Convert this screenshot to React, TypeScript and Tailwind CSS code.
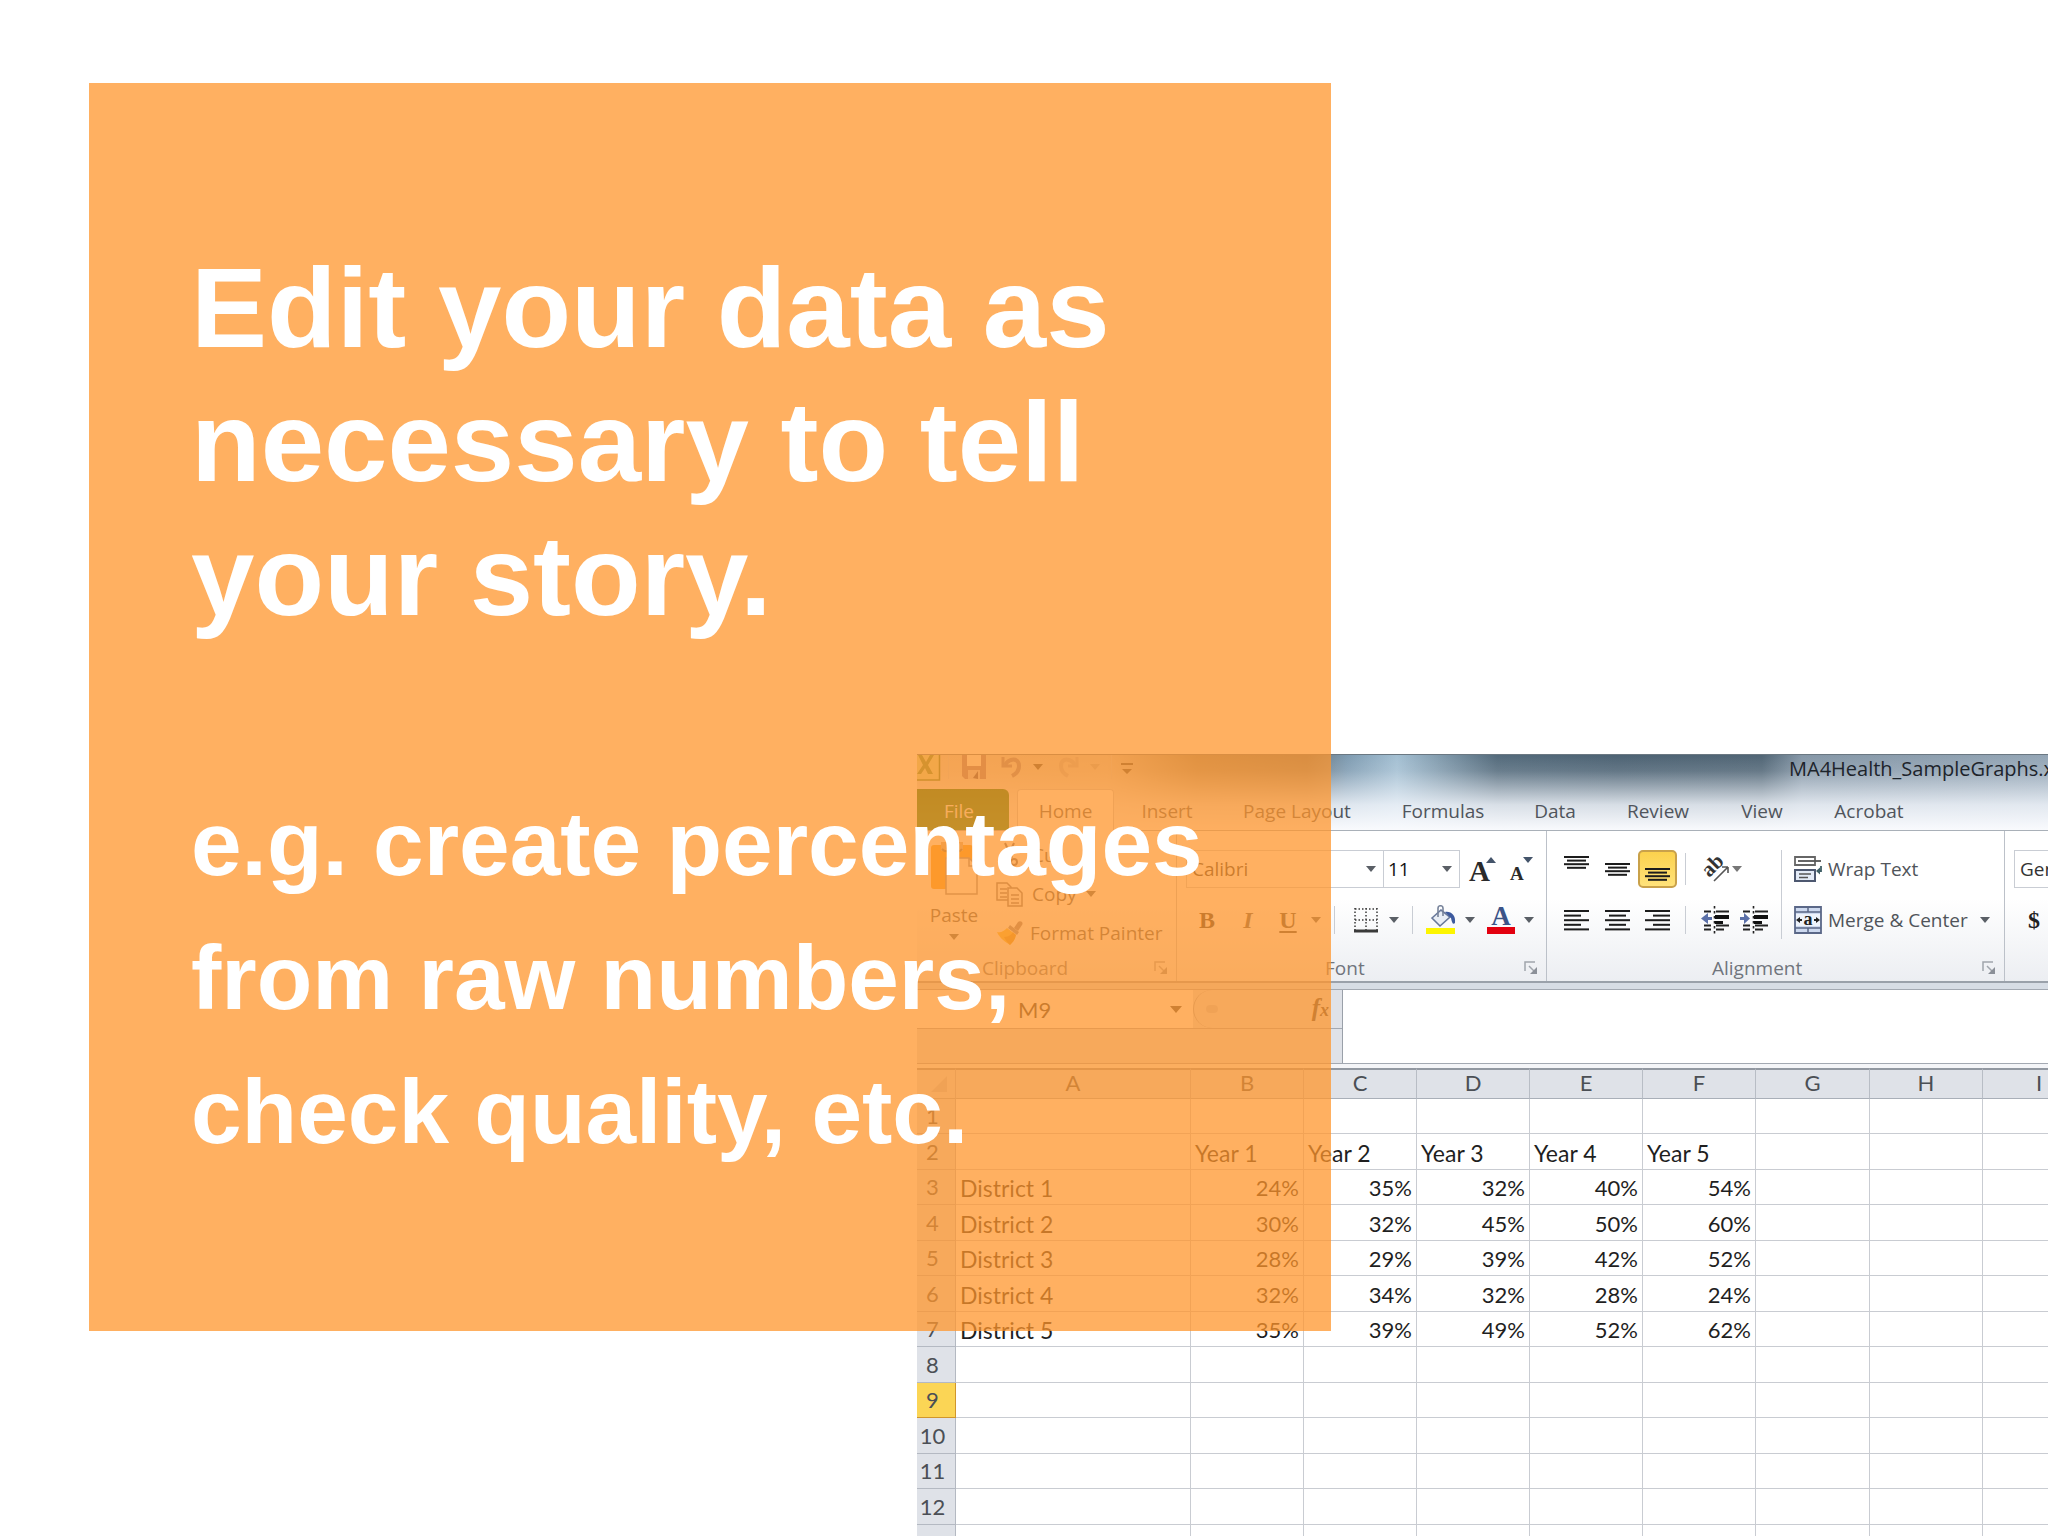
import type { ReactNode } from "react";

const UI = "font-['Open_Sans','Noto_Sans',sans-serif]";
const CELL = "font-['Lato','Noto_Sans',sans-serif]";

const tabs = [
  { name: "Insert", width: "w-[106px]" },
  { name: "Page Layout", width: "w-[154px]" },
  { name: "Formulas", width: "w-[138px]" },
  { name: "Data", width: "w-[86px]" },
  { name: "Review", width: "w-[120px]" },
  { name: "View", width: "w-[88px]" },
  { name: "Acrobat", width: "w-[126px]" },
];

const columns = [
  { name: "A", width: "w-[235px]" },
  { name: "B", width: "w-[113px]" },
  { name: "C", width: "w-[113px]" },
  { name: "D", width: "w-[113px]" },
  { name: "E", width: "w-[113px]" },
  { name: "F", width: "w-[113px]" },
  { name: "G", width: "w-[114px]" },
  { name: "H", width: "w-[113px]" },
  { name: "I", width: "w-[113px]" },
];

const rows: string[][] = [
  [],
  ["", "Year 1", "Year 2", "Year 3", "Year 4", "Year 5"],
  ["District 1", "24%", "35%", "32%", "40%", "54%"],
  ["District 2", "30%", "32%", "45%", "50%", "60%"],
  ["District 3", "28%", "29%", "39%", "42%", "52%"],
  ["District 4", "32%", "34%", "32%", "28%", "24%"],
  ["District 5", "35%", "39%", "49%", "52%", "62%"],
  [],
  [],
  [],
  [],
  [],
];

function Caret({ className = "text-[#5a5f66]" }: { className?: string }) {
  return (
    <svg viewBox="0 0 10 6" className={`h-[6px] w-[10px] shrink-0 ${className}`} aria-hidden="true">
      <path d="M0 0h10L5 6z" fill="currentColor" />
    </svg>
  );
}

function Rule({ className = "" }: { className?: string }) {
  return <span className={`w-px shrink-0 bg-[#c9cdd4] ${className}`} />;
}

function IconButton({ label, className = "w-10", children }: { label: string; className?: string; children: ReactNode }) {
  return (
    <button type="button" aria-label={label} className={`flex h-[38px] shrink-0 items-center justify-center ${className}`}>
      {children}
    </button>
  );
}

function Bars({ lines, y = 0 }: { lines: [number, number][]; y?: number }) {
  return (
    <svg viewBox="0 0 26 26" className="h-[26px] w-[26px]" aria-hidden="true">
      {lines.map(([x, w], i) => (
        <rect key={i} x={x} y={y + i * 4.6} width={w} height={2} fill="#1c1c1c" />
      ))}
    </svg>
  );
}

function TightBars({ y }: { y: number }) {
  return (
    <svg viewBox="0 0 26 34" className="h-[34px] w-[26px] shrink-0" aria-hidden="true">
      {[
        [0, 25],
        [3, 19],
        [0, 25],
        [3, 19],
      ].map(([x, w], i) => (
        <rect key={i} x={x} y={y + i * 3.6} width={w} height={2} fill="#1c1c1c" />
      ))}
    </svg>
  );
}

function Launcher() {
  return (
    <button type="button" aria-label="More options" className="ml-auto shrink-0">
      <svg viewBox="0 0 14 14" className="h-[14px] w-[14px]" fill="none" stroke="#a0a5ac" strokeWidth="1.5" aria-hidden="true">
        <path d="M1 10V1h10" />
        <path d="M5 5l6 6" />
        <path d="M13 6v7H6z" fill="#8b9098" stroke="none" />
      </svg>
    </button>
  );
}

function Group({ name, className, labelPad, children }: { name: string; className: string; labelPad: string; children: ReactNode }) {
  return (
    <section aria-label={name} className={`flex shrink-0 flex-col border-r border-[#bcc1c9] ${className}`}>
      <div className="h-[124px]">{children}</div>
      <div className={`flex h-[26px] items-center pr-2 ${labelPad}`}>
        <span className="leading-[26px] text-[#70757d]">{name}</span>
        <Launcher />
      </div>
    </section>
  );
}

function Indent({ right = false }: { right?: boolean }) {
  return (
    <svg viewBox="0 0 28 28" className="h-[28px] w-[28px]" aria-hidden="true">
      <path d="M13.5 0v28" stroke="#222" strokeWidth="1.6" strokeDasharray="2.5 2.5" />
      <path d="M3 5.500h7M3 19.500h7M3 23.500h7" stroke="#222" strokeWidth="2" />
      <path d="M15 5.500h13M15 19.500h13M15 23.500h8" stroke="#222" strokeWidth="2" />
      <path d="M14 9h14v4H14zM14 15h8v3h-8z" fill="#111" />
      {right ? (
        <path d="M0 11h4V7l6 5.500-6 5.500v-4H0z" fill="#5b70a8" />
      ) : (
        <path d="M11 11H7V7l-7 5.500 7 5.500v-4h4z" fill="#5b70a8" />
      )}
    </svg>
  );
}

function TitleBar() {
  return (
    <header className="bg-[linear-gradient(to_bottom,rgba(240,244,250,0)_0%,rgba(240,244,250,0.15)_22%,rgba(240,244,250,0.85)_66%,rgba(250,251,254,1)_100%),linear-gradient(to_right,#d5d0c8_0px,#cdc8c0_190px,#85867f_280px,#66757f_390px,#7d9ab0_430px,#a3bfd2_480px,#52697a_580px,#4b6172_700px,#4f6474_845px,#8496a6_885px,#93a5b5_1131px)]">
      <div className="flex h-[35px] items-start border-t border-[#6b7882]">
        <svg viewBox="0 0 24 26" className="h-[26px] w-[24px] shrink-0" aria-hidden="true">
          <path d="M0 0h22v25H0z" fill="#cfdc9a" />
          <path d="M22.500 0v25H0" fill="none" stroke="#4a7a2a" strokeWidth="1.5" />
          <path d="M1 0h4l4 7 4-7h4l-6 10 5 9h-5l-3-6-4 6H0l6-9z" fill="#5d8a3a" />
        </svg>
        <Rule className="ml-[7px] h-[24px] bg-[#9a9a9a]" />
        <button type="button" aria-label="Save" className="ml-[13px]">
          <svg viewBox="0 0 24 25" className="h-[25px] w-[24px]" aria-hidden="true">
            <path d="M0 0h24v24H3l-3-3z" fill="#8f7a90" />
            <path d="M5 0h14v11H5z" fill="#f4f1ee" />
            <path d="M6 15h12v9H6z" fill="#c9c4cc" />
            <path d="M11 23l5-7v8z" fill="#4d4160" />
          </svg>
        </button>
        <button type="button" aria-label="Undo" className="ml-[15px] flex items-center gap-[10px]">
          <svg viewBox="0 0 22 24" className="h-[24px] w-[22px]" fill="none" stroke="#8a7f94" strokeWidth="4" aria-hidden="true">
            <path d="M2 2v9h9" strokeWidth="3" />
            <path d="M4 10C8 3 18 2 18 11c0 5-3 8-7 10" />
          </svg>
          <Caret className="text-[#444]" />
        </button>
        <button type="button" aria-label="Redo" className="ml-[14px] flex items-center gap-[11px] opacity-35">
          <svg viewBox="0 0 22 24" className="h-[24px] w-[22px]" fill="none" stroke="#8a8494" strokeWidth="4" aria-hidden="true">
            <path d="M20 2v9h-9" strokeWidth="3" />
            <path d="M18 10C14 3 4 2 4 11c0 5 3 8 7 10" />
          </svg>
          <Caret className="text-[#777]" />
        </button>
        <Rule className="ml-[11px] h-[24px] bg-[#9a9a9a]" />
        <button type="button" aria-label="Customize Quick Access Toolbar" className="mt-[8px] ml-[9px]">
          <svg viewBox="0 0 12 12" className="h-[12px] w-[12px]" fill="#444" aria-hidden="true">
            <path d="M0 0h12v2H0zM1 6h10l-5 5z" />
          </svg>
        </button>
        <h2 className="ml-[656px] text-[20px] leading-[28px] whitespace-nowrap text-[#1d242b]">MA4Health_SampleGraphs.x</h2>
      </div>
      <nav aria-label="Ribbon tabs" className="flex h-[42px] border-b border-[#a9b0b8] leading-[44px] text-[#50555c]">
        <button type="button" className="w-[92px] shrink-0 rounded-tr-md bg-[linear-gradient(to_bottom,#0b6a0b,#1b8020)] pr-2 text-[#e6f0e6]">File</button>
        <button type="button" className="-mb-px ml-2 w-[97px] shrink-0 rounded-t-sm border border-b-0 border-[#c3c8cf] bg-white leading-[42px]">Home</button>
        {tabs.map((t) => (
          <button key={t.name} type="button" className={`shrink-0 whitespace-nowrap ${t.width}`}>
            {t.name}
          </button>
        ))}
      </nav>
    </header>
  );
}

function Clipboard() {
  return (
    <Group name="Clipboard" className="w-[260px]" labelPad="pl-[65px]">
      <div className="flex pl-[13px]">
        <button type="button" className="flex w-[48px] flex-col items-center pt-[10px]">
          <svg viewBox="0 0 48 54" className="h-[54px] w-[48px]" aria-hidden="true">
            <rect x="1" y="4" width="42" height="44" rx="3" fill="#f5a52b" />
            <path d="M11 1h22v9H11z" fill="#d8b58a" />
            <path d="M12 8c3 3 6 3 8 0M24 8c3 3 6 3 8 0" fill="none" stroke="#8a7048" strokeWidth="2" />
            <path d="M16 17h23l8 8v28H16z" fill="#fff" stroke="#8c8a94" strokeWidth="1.5" />
            <path d="M39 17v8h8" fill="none" stroke="#8c8a94" strokeWidth="1.5" />
          </svg>
          <span className="mt-[6px] leading-7">Paste</span>
          <span className="flex h-[16px] items-center">
            <Caret />
          </span>
        </button>
        <div className="flex flex-col pt-[4px] pl-[18px]">
          <button type="button" className="flex h-[39px] items-center gap-2">
            <svg viewBox="0 0 28 26" className="h-[26px] w-[28px]" fill="none" stroke="#6b6470" strokeWidth="2" aria-hidden="true">
              <path d="M9 1l7 15M18 1l-7 15" />
              <circle cx="9" cy="19" r="3" />
              <circle cx="18" cy="20" r="3" />
            </svg>
            Cut
          </button>
          <button type="button" className="flex h-[39px] items-center gap-2">
            <svg viewBox="0 0 28 26" className="h-[26px] w-[28px]" fill="#f7f7f7" stroke="#77747e" strokeWidth="1.5" aria-hidden="true">
              <path d="M1 2h10l4 4v13H1z" />
              <path d="M4 8h7M4 12h7M4 16h7" />
              <path d="M12 7h9l5 5v13H12z" />
              <path d="M15 14h8M15 18h8M15 22h8" />
            </svg>
            Copy
            <span className="pl-px">
              <Caret />
            </span>
          </button>
          <button type="button" className="flex h-[39px] items-center gap-[6px] whitespace-nowrap">
            <svg viewBox="0 0 28 26" className="h-[26px] w-[28px]" aria-hidden="true">
              <path d="M18 8l4-6c2-2 6 0 4 3l-4 6z" fill="#8a7f86" />
              <path d="M14 5l9 7-2 3-9-7z" fill="#8c8890" />
              <path d="M11 8l9 7c-1 5-4 8-6 10C10 22 4 19 1 12c4 1 7-1 10-4z" fill="#f0c040" />
              <path d="M8 17c5 0 8-3 9-5l3 3c-1 5-4 8-6 10-2-2-4-4-6-8z" fill="#c9861c" opacity="0.7" />
            </svg>
            Format Painter
          </button>
        </div>
      </div>
    </Group>
  );
}

function FontGroup() {
  return (
    <Group name="Font" className="w-[370px]" labelPad="pl-[148px]">
      <div className="flex items-center pt-[19px] pl-[9px]">
        <label className="relative block">
          <select aria-label="Font" className={`${UI} h-[38px] w-[198px] appearance-none border border-[#c9cdd4] bg-white pl-[5px] text-[19px] text-[#333]`}>
            <option>Calibri</option>
          </select>
          <span className="pointer-events-none absolute inset-y-0 right-[8px] flex items-center">
            <Caret />
          </span>
        </label>
        <label className="relative block">
          <select aria-label="Font size" className={`${UI} h-[38px] w-[76px] appearance-none border border-l-0 border-[#c9cdd4] bg-white pl-1 text-[19px] text-[#111]`}>
            <option>11</option>
          </select>
          <span className="pointer-events-none absolute inset-y-0 right-[8px] flex items-center">
            <Caret />
          </span>
        </label>
        <button type="button" aria-label="Grow font" className="ml-[9px] flex h-[38px] font-['Liberation_Serif',serif] text-[#2b2b2b]">
          <span className="text-[29px] leading-[42px] font-bold">A</span>
          <svg viewBox="0 0 10 6" className="-ml-1 mt-[7px] h-[6px] w-[10px]" aria-hidden="true">
            <path d="M0 6h10L5 0z" fill="#44546a" />
          </svg>
        </button>
        <button type="button" aria-label="Shrink font" className="ml-[14px] flex h-[38px] font-['Liberation_Serif',serif] text-[#2b2b2b]">
          <span className="text-[19px] leading-[48px] font-bold">A</span>
          <span className="-ml-px mt-[7px]">
            <Caret className="text-[#44546a]" />
          </span>
        </button>
      </div>
      <div className="flex items-center pt-[13px] pl-[9px]">
        <IconButton label="Bold" className="w-[42px] font-['Liberation_Serif',serif] text-[24px] font-bold text-[#333]">B</IconButton>
        <IconButton label="Italic" className="w-[40px] font-['Liberation_Serif',serif] text-[24px] font-bold text-[#555] italic">I</IconButton>
        <IconButton label="Underline" className="w-[40px] font-['Liberation_Serif',serif] text-[24px] font-bold text-[#444] underline decoration-2 underline-offset-3">U</IconButton>
        <IconButton label="Underline style" className="w-[16px]">
          <Caret />
        </IconButton>
        <Rule className="ml-[10px] h-[28px]" />
        <IconButton label="Borders" className="ml-[9px] w-[64px] gap-[10px]">
          <svg viewBox="0 0 26 26" className="h-[26px] w-[26px] shrink-0" fill="none" stroke="#3a3a3a" aria-hidden="true">
            <path d="M2 2h22M2 13h22M2 1v22M13 1v22M24 1v22" strokeWidth="1.5" strokeDasharray="1.5 2" />
            <path d="M1 24h24" strokeWidth="3" />
          </svg>
          <Caret />
        </IconButton>
        <Rule className="ml-[4px] h-[28px]" />
        <IconButton label="Fill color" className="ml-[10px] w-[54px] gap-[8px]">
          <svg viewBox="0 0 32 30" className="h-[30px] w-[32px] shrink-0" aria-hidden="true">
            <rect x="1" y="23" width="29" height="6" fill="#fdf500" />
            <path d="M7 13L16 5l9 7-10 9z" fill="#e8edf5" stroke="#68789a" strokeWidth="1.6" />
            <path d="M13 12V3c0-3 5-3 5 0v8" fill="none" stroke="#77839a" strokeWidth="1.6" />
            <path d="M20 7c6-1 11 3 10 11-2 2-3 0-4-5z" fill="#3d5a9e" />
          </svg>
          <Caret />
        </IconButton>
        <IconButton label="Font color" className="ml-[8px] w-[50px] gap-[8px]">
          <svg viewBox="0 0 30 30" className="h-[30px] w-[30px] shrink-0" aria-hidden="true">
            <rect x="1" y="22" width="28" height="7" fill="#e3000f" />
            <text x="15" y="20" textAnchor="middle" fontFamily="Liberation Serif" fontWeight="700" fontSize="27" fill="#3b5488">A</text>
          </svg>
          <Caret />
        </IconButton>
      </div>
    </Group>
  );
}

function AlignmentGroup() {
  return (
    <Group name="Alignment" className="w-[458px]" labelPad="pl-[165px]">
      <div className="flex pt-[19px] pl-[9px]">
        <div className="flex flex-col gap-[13px]">
          <div className="flex items-center">
            <IconButton label="Top align" className="w-[41px]">
              <TightBars y={4} />
            </IconButton>
            <IconButton label="Middle align" className="w-[41px]">
              <TightBars y={11} />
            </IconButton>
            <IconButton label="Bottom align" className="w-[39px] rounded-[5px] border-2 border-[#c9a14a] bg-[linear-gradient(to_bottom,#fbd14d,#ffe27a)]">
              <TightBars y={16} />
            </IconButton>
            <Rule className="ml-[8px] h-[32px]" />
            <IconButton label="Orientation" className="ml-[15px] w-[42px] gap-[2px]">
              <svg viewBox="0 0 28 28" className="h-[28px] w-[28px] shrink-0" aria-hidden="true">
                <text x="4" y="21" transform="rotate(-45 8 18)" fontFamily="Liberation Serif" fontWeight="700" fontSize="21" fill="#333">ab</text>
                <path d="M12 26L26 12M26 12h-6M26 12v6" fill="none" stroke="#555" strokeWidth="1.6" />
              </svg>
              <Caret className="text-[#777]" />
            </IconButton>
          </div>
          <div className="flex items-center">
            <IconButton label="Align left" className="w-[41px]">
              <Bars y={3} lines={[[0, 25], [0, 17], [0, 25], [0, 17], [0, 25]]} />
            </IconButton>
            <IconButton label="Center" className="w-[41px]">
              <Bars y={3} lines={[[0, 25], [4, 17], [0, 25], [4, 17], [0, 25]]} />
            </IconButton>
            <IconButton label="Align right" className="w-[39px]">
              <Bars y={3} lines={[[0, 25], [8, 17], [0, 25], [8, 17], [0, 25]]} />
            </IconButton>
            <Rule className="ml-[8px] h-[28px]" />
            <IconButton label="Decrease indent" className="ml-[9px] w-[39px]">
              <Indent />
            </IconButton>
            <IconButton label="Increase indent" className="w-[39px]">
              <Indent right />
            </IconButton>
          </div>
        </div>
        <Rule className="ml-[8px] h-[89px]" />
        <div className="flex flex-col gap-[13px] pl-[12px] whitespace-nowrap">
          <button type="button" className="flex h-[38px] items-center gap-[6px]">
            <svg viewBox="0 0 28 28" className="h-[28px] w-[28px]" fill="none" aria-hidden="true">
              <path d="M1 2h20v8H1z" fill="#fff" stroke="#666" strokeWidth="1.8" />
              <path d="M4 6h23" stroke="#555" strokeWidth="1.8" />
              <path d="M1 15h20v11H1z" fill="#e3ebf7" stroke="#4d5870" strokeWidth="2" />
              <path d="M5 19h12M5 22.500h9" stroke="#555" strokeWidth="1.6" />
              <path d="M27 11v5h-3" stroke="#3f5f66" strokeWidth="1.8" />
              <path d="M22 16l4-3.500v7z" fill="#3f5f66" />
            </svg>
            Wrap Text
          </button>
          <button type="button" className="flex h-[38px] items-center gap-[6px]">
            <svg viewBox="0 0 28 28" className="h-[28px] w-[28px]" aria-hidden="true">
              <path d="M1 1h26v26H1z" fill="#cdd9ef" stroke="#5a6787" strokeWidth="1.8" />
              <path d="M1 6h26M1 22h26M14 1v5M14 22v5" stroke="#5a6787" strokeWidth="1.5" />
              <path d="M2 8h24v12H2z" fill="#eef3fb" />
              <path d="M2 14l4-3v2h2v2H6v2zM26 14l-4-3v2h-2v2h2v2z" fill="#222" />
              <text x="14" y="19" textAnchor="middle" fontFamily="Liberation Serif" fontWeight="700" fontSize="18" fill="#222">a</text>
            </svg>
            Merge &amp; Center
            <span className="pl-[6px]">
              <Caret />
            </span>
          </button>
        </div>
      </div>
    </Group>
  );
}

function Ribbon() {
  return (
    <div className="flex h-[152px] overflow-hidden border-b-2 border-[#9aa1aa] bg-[linear-gradient(to_bottom,#ffffff_0%,#ffffff_45%,#eceef2_100%)] leading-7 text-[#50545a]">
      <Clipboard />
      <FontGroup />
      <AlignmentGroup />
      <section aria-label="Number" className="flex shrink-0 flex-col gap-[13px] pt-[19px] pl-[9px]">
        <select aria-label="Number format" className={`${UI} h-[38px] w-[160px] appearance-none border border-[#c9cdd4] bg-white pl-[5px] text-[19px] text-[#333]`}>
          <option>General</option>
        </select>
        <IconButton label="Accounting format" className="w-[40px] font-['Liberation_Serif',serif] text-[24px] font-bold text-[#222]">$</IconButton>
      </section>
    </div>
  );
}

function FormulaBar() {
  return (
    <div className="flex h-[75px] border-t border-b border-[#a3a9b2] bg-[#dfe2e8]">
      <div className="flex w-[426px] shrink-0 flex-col border-r border-[#9aa0a9]">
        <div className="flex h-[39px] shrink-0 border-b border-[#a3a9b2]">
          <div className="flex w-[276px] items-center bg-white pr-[11px]">
            <input aria-label="Name box" defaultValue="M9" className={`${CELL} w-full min-w-0 pl-[101px] text-[22px] text-[#333]`} />
            <svg viewBox="0 0 12 7" className="h-[7px] w-[12px] shrink-0" aria-hidden="true">
              <path d="M0 0h12L6 7z" fill="#444" />
            </svg>
          </div>
          <div className="flex flex-1 items-center rounded-l-full border-l border-[#a3a9b2] pr-[13px] pl-[12px]">
            <span className="h-[8px] w-[12px] rounded-full bg-[#c3c8d0]" />
            <button type="button" aria-label="Insert function" className="ml-auto flex items-baseline font-['Liberation_Serif',serif] text-[25px] leading-8 font-bold text-[#444] italic">
              f<span className="text-[18px]">x</span>
            </button>
          </div>
        </div>
      </div>
      <input aria-label="Formula bar" className="min-w-0 flex-1 bg-white" />
    </div>
  );
}

function Grid() {
  return (
    <table className={`${CELL} w-[1179px] table-fixed border-separate border-spacing-0 text-[22px] text-[#1f1f1f]`}>
      <thead>
        <tr className="h-[31px] bg-[#dfe2e8] text-[#4b4f55]">
          <th aria-label="Select all" className="w-[39px] border-t-2 border-r border-b border-t-[#9298a1] border-r-[#b8bdc5] border-b-[#a9afb8] p-0 pr-2">
            <svg viewBox="0 0 16 16" className="ml-auto h-[16px] w-[16px]" aria-hidden="true">
              <path d="M16 0v16H0z" fill="#c3c8d0" />
            </svg>
          </th>
          {columns.map((c) => (
            <th key={c.name} scope="col" className={`border-t-2 border-r border-b border-t-[#9298a1] border-r-[#b8bdc5] border-b-[#a9afb8] p-0 align-top leading-[25px] font-normal ${c.width}`}>
              {c.name}
            </th>
          ))}
        </tr>
      </thead>
      <tbody>
        {rows.map((cells, r) => (
          <tr key={r} className={r % 2 ? "h-[36px]" : "h-[35px]"}>
            <th
              scope="row"
              className={`border-r border-b p-0 pr-[7px] leading-[32px] font-normal text-[#4b4f55] ${
                r === 8 ? "border-[#d0962c] bg-[#fbd555]" : "border-[#b4b9c2] bg-[#dfe2e8]"
              }`}
            >
              {r + 1}
            </th>
            {columns.map((c, i) => {
              const value = cells[i] ?? "";
              return (
                <td
                  key={c.name}
                  className={`border-r border-b border-[#c9ccd2] bg-white p-0 pt-[2px] leading-[32px] whitespace-nowrap ${
                    value.endsWith("%") ? "pr-[4px] text-right" : "pl-[4px] text-left text-[23px]"
                  }`}
                >
                  {value}
                </td>
              );
            })}
          </tr>
        ))}
        <tr className="h-[35px]">
          <th aria-hidden="true" className="border-r border-[#b4b9c2] bg-[#dfe2e8] p-0" />
          {columns.map((c) => (
            <td key={c.name} className="border-r border-[#c9ccd2] p-0" />
          ))}
        </tr>
      </tbody>
    </table>
  );
}

export default function App() {
  return (
    <main className="grid h-screen min-h-[1536px] grid-cols-1 grid-rows-1 overflow-hidden bg-white">
      <div className={`${UI} col-start-1 row-start-1 mt-[754px] ml-[917px] min-w-0 overflow-hidden text-[19px]`}>
        <TitleBar />
        <Ribbon />
        <div className="h-[6px] bg-[#d7dde5]" />
        <FormulaBar />
        <div className="h-[4px] bg-[#f4f5f8]" />
        <Grid />
      </div>
      <section className="pointer-events-none z-10 col-start-1 row-start-1 mt-[83px] mr-auto ml-[89px] w-full max-w-[1242px] self-start bg-[rgba(255,150,44,0.75)] px-[102px] pt-[158px] pb-[152px] font-['Liberation_Sans',Arial,sans-serif] leading-[134px] font-bold text-white">
        <h1 className="text-[114px]">
          Edit your data as
          <br />
          necessary to tell
          <br />
          your story.
        </h1>
        <p className="mt-[134px] text-[91px] whitespace-nowrap">
          e.g. create percentages
          <br />
          from raw numbers,
          <br />
          check quality, etc.
        </p>
      </section>
    </main>
  );
}
